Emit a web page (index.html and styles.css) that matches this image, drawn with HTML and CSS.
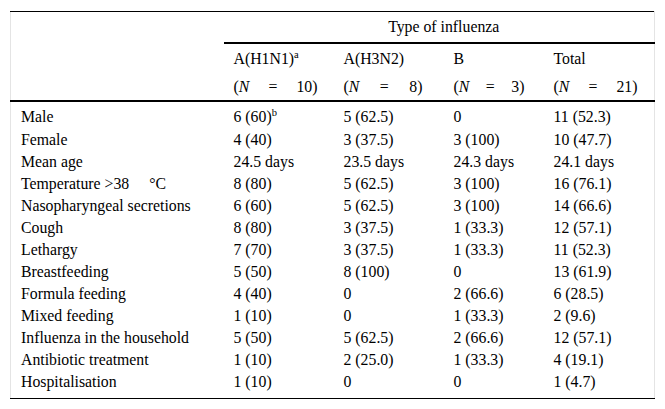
FILE: index.html
```html
<!DOCTYPE html>
<html>
<head>
<meta charset="utf-8">
<link rel="stylesheet" href="styles.css">
</head>
<body>
<div class="wrap">
<table class="tbl">
  <colgroup>
    <col class="c0"><col class="c1"><col class="c2"><col class="c3"><col class="c4">
  </colgroup>
  <thead>
    <tr class="h-type">
      <th></th>
      <th colspan="4" class="type">Type of influenza</th>
    </tr>
    <tr class="h-name">
      <th></th>
      <th>A(H1N1)<sup>a</sup></th>
      <th>A(H3N2)</th>
      <th>B</th>
      <th>Total</th>
    </tr>
    <tr class="h-n">
      <th></th>
      <th><span class="n n1"><span>(<i>N</i></span><span>=</span><span>10)</span></span></th>
      <th><span class="n n2"><span>(<i>N</i></span><span>=</span><span>8)</span></span></th>
      <th><span class="n n3"><span>(<i>N</i></span><span>=</span><span>3)</span></span></th>
      <th><span class="n n4"><span>(<i>N</i></span><span>=</span><span>21)</span></span></th>
    </tr>
  </thead>
  <tbody>
    <tr class="first"><td>Male</td><td>6 (60)<sup>b</sup></td><td>5 (62.5)</td><td>0</td><td>11 (52.3)</td></tr>
    <tr><td>Female</td><td>4 (40)</td><td>3 (37.5)</td><td>3 (100)</td><td>10 (47.7)</td></tr>
    <tr><td>Mean age</td><td>24.5 days</td><td>23.5 days</td><td>24.3 days</td><td>24.1 days</td></tr>
    <tr><td>Temperature &gt;38<span class="deg">°C</span></td><td>8 (80)</td><td>5 (62.5)</td><td>3 (100)</td><td>16 (76.1)</td></tr>
    <tr><td>Nasopharyngeal secretions</td><td>6 (60)</td><td>5 (62.5)</td><td>3 (100)</td><td>14 (66.6)</td></tr>
    <tr><td>Cough</td><td>8 (80)</td><td>3 (37.5)</td><td>1 (33.3)</td><td>12 (57.1)</td></tr>
    <tr><td>Lethargy</td><td>7 (70)</td><td>3 (37.5)</td><td>1 (33.3)</td><td>11 (52.3)</td></tr>
    <tr><td>Breastfeeding</td><td>5 (50)</td><td>8 (100)</td><td>0</td><td>13 (61.9)</td></tr>
    <tr><td>Formula feeding</td><td>4 (40)</td><td>0</td><td>2 (66.6)</td><td>6 (28.5)</td></tr>
    <tr><td>Mixed feeding</td><td>1 (10)</td><td>0</td><td>1 (33.3)</td><td>2 (9.6)</td></tr>
    <tr><td>Influenza in the household</td><td>5 (50)</td><td>5 (62.5)</td><td>2 (66.6)</td><td>12 (57.1)</td></tr>
    <tr><td>Antibiotic treatment</td><td>1 (10)</td><td>2 (25.0)</td><td>1 (33.3)</td><td>4 (19.1)</td></tr>
    <tr class="last"><td>Hospitalisation</td><td>1 (10)</td><td>0</td><td>0</td><td>1 (4.7)</td></tr>
  </tbody>
</table>
</div>
</body>
</html>
```
FILE: styles.css
```css
html, body {
  margin: 0;
  padding: 0;
  background: #ffffff;
}
.wrap {
  padding: 11px 0 0 10px;
}
.tbl {
  width: 645px;
  border-collapse: collapse;
  font-family: "Liberation Serif", "Times New Roman", serif;
  font-size: 15.8px;
  color: #000;
  border-left: 1px solid #e4e4e4;
  border-right: 1px solid #e4e4e4;
  border-top: 1px solid #000;
  border-bottom: 1px solid #000;
  table-layout: fixed;
}
.c0 { width: 213px; }
.c1 { width: 110px; }
.c2 { width: 110px; }
.c3 { width: 100px; }
.c4 { width: 111px; }
th, td {
  padding: 0 0 0 10px;
  text-align: left;
  font-weight: normal;
  white-space: nowrap;
  vertical-align: middle;
}
.h-type th { height: 30px; }
.h-type .type {
  text-align: center;
  border-bottom: 2px solid #000;
}
.h-name th { height: 30px; }
.h-n th { height: 26px; border-bottom: 2px solid #000; }
tbody td { height: 22px; line-height: 22px; }
tbody tr.first td { height: 23px; padding-top: 4px; vertical-align: top; }
tbody tr.last td { height: 27px; vertical-align: top; }
sup {
  font-size: 10.5px;
  line-height: 0;
  vertical-align: 6px;
}
.n {
  display: inline-flex;
  justify-content: space-between;
}
.n1 { width: 84px; }
.n2 { width: 79px; }
.n3 { width: 71px; }
.n4 { width: 84px; }
.deg { margin-left: 20px; }
```
